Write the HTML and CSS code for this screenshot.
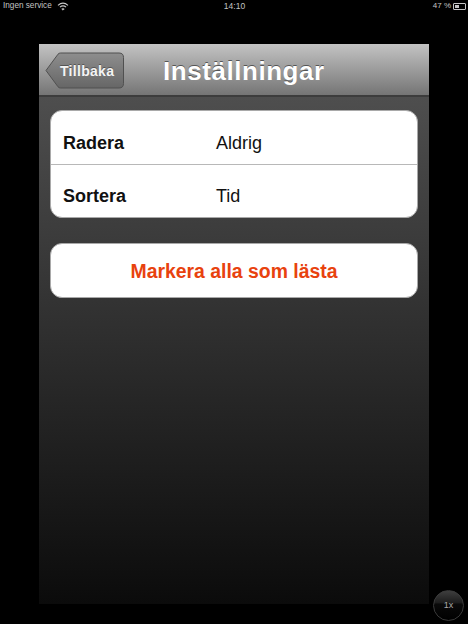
FILE: index.html
```html
<!DOCTYPE html>
<html lang="en">
<head>
    <meta charset="UTF-8">
    <meta name="viewport" content="width=device-width, initial-scale=1.0">
    <title>Inställningar</title>
    <link rel="stylesheet" href="styles.css">
</head>
<body>
    <div class="status-bar">
        <div class="status-left">
            <span>Ingen service</span>
            <svg class="wifi" width="12" height="9" viewBox="0 0 12 9" fill="none" stroke="#c8c8c8">
                <path d="M1 3.4C4 .7 8 .7 11 3.4" stroke-width="1.1"/>
                <path d="M2.9 5.2C4.8 3.6 7.2 3.6 9.1 5.2" stroke-width="1.1"/>
                <path d="M4.7 6.9L6 8.2L7.3 6.9C6.5 6.2 5.5 6.2 4.7 6.9Z" fill="#c8c8c8" stroke-width=".6"/>
            </svg>
        </div>
        <div class="status-time">14:10</div>
        <div class="status-right">
            <span>47 %</span>
            <div class="battery"><div class="battery-level"></div></div>
        </div>
    </div>

    <div class="screen">
        <div class="nav-bar">
            <button class="back-button">
                <svg class="back-shape" width="81" height="37" viewBox="0 0 81 37">
                    <defs>
                        <linearGradient id="backFill" x1="0" y1="0" x2="0" y2="1">
                            <stop offset="0" stop-color="#8e8e8e"/>
                            <stop offset="1" stop-color="#666"/>
                        </linearGradient>
                    </defs>
                    <path d="M1 18.5L13 2.2Q14 1 15.5 1H74Q78.5 1 78.5 5.5V31.5Q78.5 36 74 36H15.5Q14 36 13 34.8Z" fill="url(#backFill)" stroke="#505050" stroke-width="1"/>
                </svg>
                <span class="back-label">Tillbaka</span>
            </button>
            <div class="nav-title">Inställningar</div>
        </div>

        <div class="content">
            <div class="group">
                <div class="row">
                    <div class="row-label">Radera</div>
                    <div class="row-value">Aldrig</div>
                </div>
                <div class="row">
                    <div class="row-label">Sortera</div>
                    <div class="row-value">Tid</div>
                </div>
            </div>
            <div class="group">
                <div class="row row-action">Markera alla som lästa</div>
            </div>
        </div>
    </div>

    <div class="zoom-button">1x</div>
</body>
</html>
```

FILE: styles.css
```css
body {
    margin: 0;
    width: 468px;
    height: 624px;
    background-color: #000;
    font-family: "Liberation Sans", Arial, sans-serif;
    position: relative;
    overflow: hidden;
}

.status-bar {
    height: 44px;
    box-sizing: border-box;
    padding: 0 2px 0 3px;
    display: grid;
    grid-template-columns: 1fr auto 1fr;
    align-items: start;
    font-size: 8px;
    line-height: 12px;
    color: #c4c4c4;
}

.status-left {
    display: flex;
    align-items: center;
    gap: 5px;
    font-size: 8.2px;
}

.wifi {
    display: block;
}

.status-time {
    font-size: 8.5px;
}

.status-right {
    display: flex;
    justify-content: flex-end;
    align-items: center;
    gap: 2px;
}

.battery {
    width: 9px;
    height: 3px;
    border: 1px solid #c4c4c4;
    border-radius: 1px;
    padding: 1px;
}

.battery-level {
    width: 4px;
    height: 3px;
    background: #c4c4c4;
}

.screen {
    width: 390px;
    height: 560px;
    margin: 0 auto;
    display: flex;
    flex-direction: column;
}

.nav-bar {
    height: 53px;
    flex-shrink: 0;
    box-sizing: border-box;
    padding: 8px 0 0 6px;
    display: flex;
    align-items: flex-start;
    background: linear-gradient(#c3c3c3, #757575);
    border-bottom: 2px solid #3c3c3c;
}

.back-button {
    width: 81px;
    height: 37px;
    padding: 0 0 0 15px;
    border: none;
    background: none;
    position: relative;
    text-align: left;
    font-family: inherit;
}

.back-shape {
    position: absolute;
    top: 0;
    left: 0;
}

.back-label {
    position: relative;
    font-size: 14px;
    font-weight: bold;
    letter-spacing: 0.3px;
    color: #f4f4f4;
    text-shadow: 0 -1px 0 #555;
}

.nav-title {
    flex-grow: 1;
    margin: 3px 0 0 37px;
    font-size: 26px;
    line-height: 32px;
    font-weight: bold;
    letter-spacing: 0.55px;
    color: #fff;
    text-shadow: 0 -1px 0 #555;
}

.content {
    flex-grow: 1;
    box-sizing: border-box;
    padding: 13px 11px 0;
    display: flex;
    flex-direction: column;
    gap: 25px;
    background: linear-gradient(#4e4e4e, #0b0b0b);
}

.group {
    background: #fff;
    border: 1px solid #a9a9a9;
    border-radius: 12px;
    overflow: hidden;
}

.row {
    height: 53px;
    box-sizing: border-box;
    padding: 11px 12px 0;
    display: flex;
    align-items: center;
    font-size: 18px;
    color: #111;
}

.row + .row {
    border-top: 1px solid #b8b8b8;
}

.row-label {
    width: 153px;
    font-weight: bold;
}

.row-action {
    padding: 2px 12px 0;
    justify-content: center;
    font-size: 19.4px;
    font-weight: bold;
    color: #e8420e;
}

.zoom-button {
    position: absolute;
    left: 433px;
    top: 590px;
    width: 29px;
    height: 29px;
    border: 1px solid #3a3a3a;
    border-radius: 50%;
    background: linear-gradient(#3e3e3e, #1c1c1c 42%, #0a0a0a 44%, #000);
    color: #aaa;
    font-size: 9px;
    line-height: 29px;
    text-align: center;
}
```
